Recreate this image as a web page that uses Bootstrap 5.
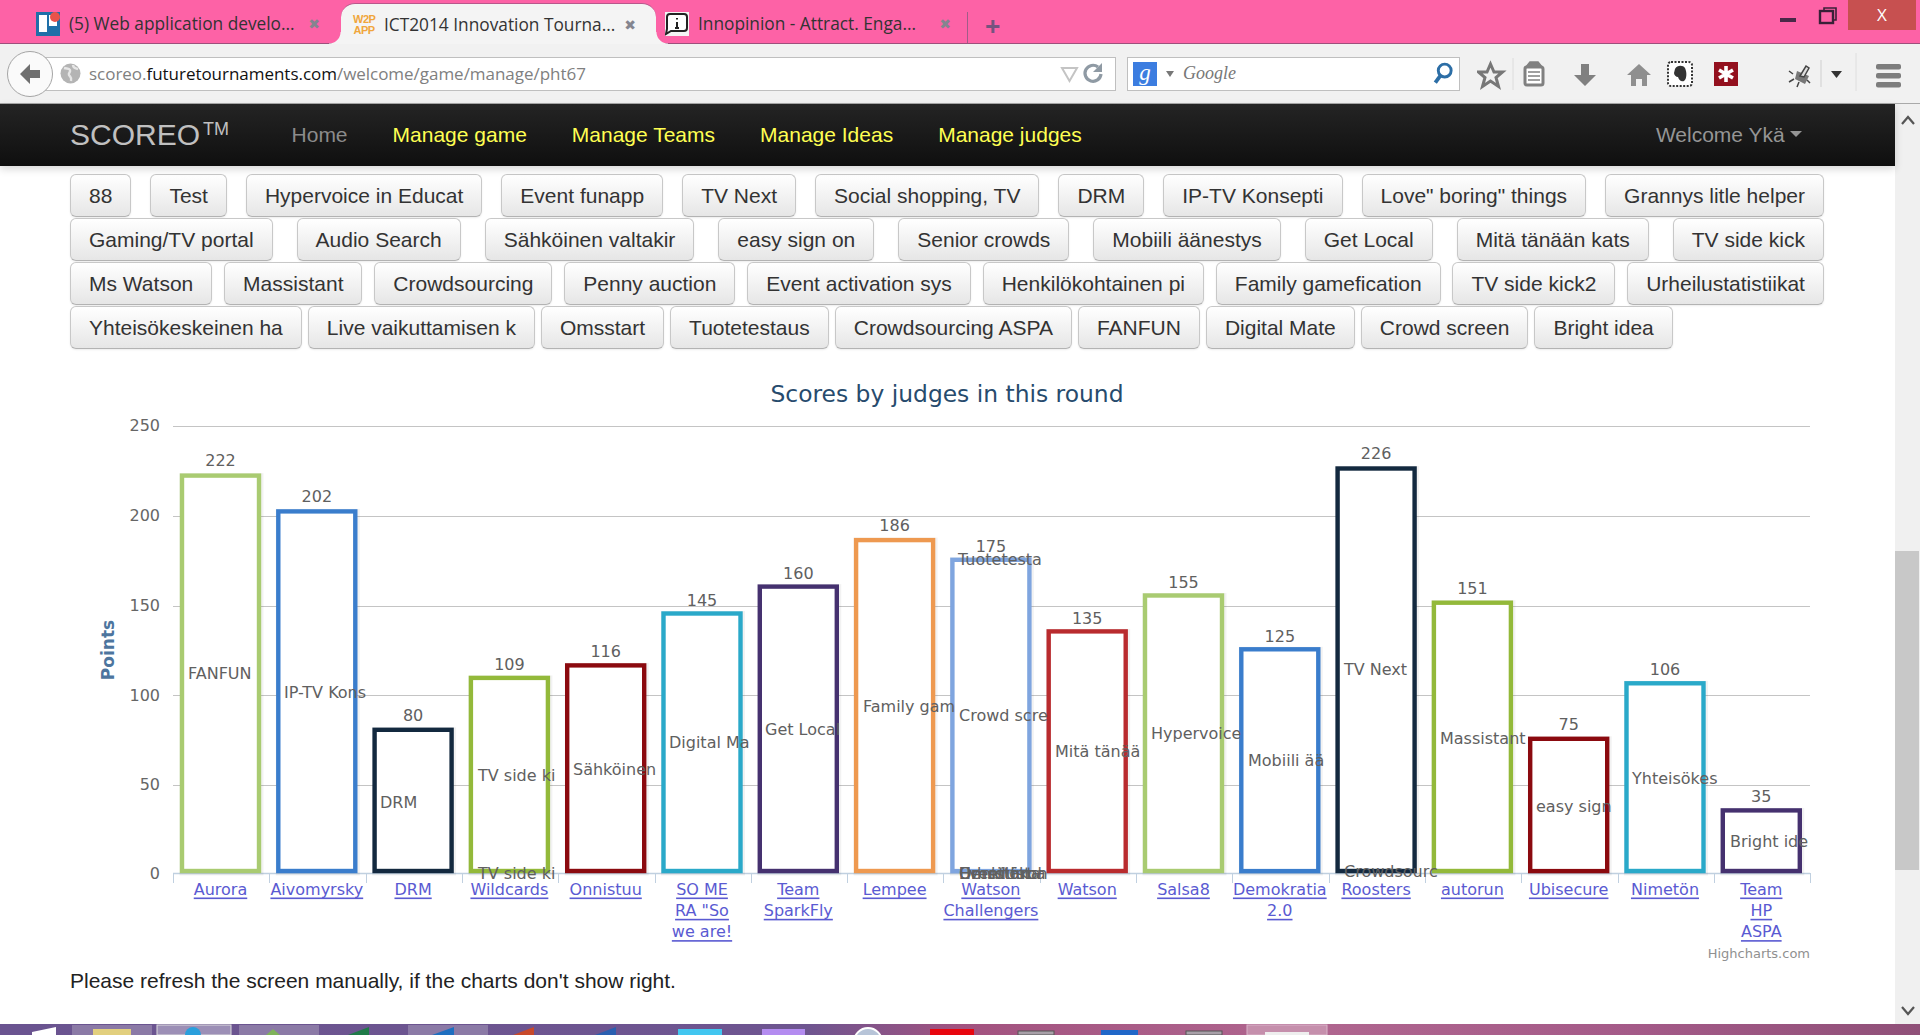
<!DOCTYPE html>
<html lang="en">
<head>
<meta charset="utf-8">
<title>ICT2014 Innovation Tournament</title>
<link href="https://cdn.jsdelivr.net/npm/bootstrap@5.3.0/dist/css/bootstrap.min.css" rel="stylesheet">
<style>
html,body{height:1035px;overflow:hidden;margin:0;background:#fff;font-family:"Liberation Sans",Arial,sans-serif;color:#333}
.shell{height:1035px}
.shell>*{flex:none}
.tabbar{height:44px;background:#fd62a6;border-bottom:1px solid #9d4f7c;padding-left:24px;font-family:"Open Sans",sans-serif;font-size:17.3px;color:#333}
.tabcell{height:43px;width:317px;padding:5px 21px 0 12px;gap:9px}
.tabcell.on{width:315px;height:41px;margin:3px 0 -1px;padding:2px 20px 0 12px;background:#f4f4f4;border-radius:14px 14px 0 0;position:relative;border-top:1px solid #b9578c;z-index:1}
.tabcell.on::before,.tabcell.on::after{content:"";position:absolute;bottom:0;width:12px;height:12px}
.tabcell.on::before{left:-12px;background:radial-gradient(circle at 0 0,transparent 11px,#f4f4f4 12px)}
.tabcell.on::after{right:-12px;background:radial-gradient(circle at 100% 0,transparent 11px,#f4f4f4 12px)}
.tabcell.third{width:311px;padding:5px 16px 0 9px}
.tabname{flex:1;white-space:nowrap;overflow:hidden}
.tabx{color:#85858f;font:14px/1 "DejaVu Sans",sans-serif}
.favi{width:24px;height:24px;flex:none}
.wtp{width:22px;flex:none;color:#f0a63c;font:700 11px/11px "Liberation Sans",sans-serif;text-align:center;letter-spacing:-.5px}
.plus{color:#75537f;font-size:27px;font-weight:700;line-height:1;border-left:1px solid #a05c88;height:31px;padding:0 0 0 17px;margin-top:12px}
.winctl{margin-left:auto;align-self:flex-start;height:30px}
.closer{width:68px;height:30px;background:#c75050;color:#fff;font:17px/30px "Open Sans",sans-serif;text-align:center;margin-right:4px}
.toolrow{height:60px;background:#f1f1f1;border-bottom:1px solid #a9a9a9;padding:0 0 0 7px;position:relative}
.backcirc{width:46px;height:46px;border-radius:50%;background:#fafafa;border:1px solid #a5a5a5;position:relative;z-index:1;flex:none;margin-right:-13px}
.urlbox,.searchbox{height:34px;background:#fff;border:1px solid #bfbfbf;font-family:"Open Sans",sans-serif;font-size:17px}
.urlbox{width:1076px;padding:0 11px 0 19px;gap:8px;color:#808080;flex:none}
.urlbox b{font-weight:400;color:#111}
.urlbox span{flex:1;letter-spacing:-.03px}
.searchbox{width:333px;margin-left:11px;padding:0 4px 0 5px;flex:none}
.gbox{width:24px;height:24px;background:#3c7de0;color:#fff;font:italic 23px/22px "Liberation Serif",serif;text-align:center;flex:none}
.gword{flex:1;color:#777;font:italic 18px "Liberation Serif",serif;padding-left:8px}
.toolicons{gap:0;margin-left:17px}
.bodyrow{height:920px}
.leftcol{width:1895px}
.scoreo{height:62px;padding:0 0 0 70px;background:linear-gradient(#242424,#0f0f0f);width:1895px;flex-wrap:nowrap;box-shadow:0 3px 8px rgba(0,0,0,.16);position:relative;z-index:1}
.scoreo .navbar-brand{font-size:30px;color:#c0c0c0;padding:0;margin:0 40px 0 0;line-height:1}
.scoreo .navbar-brand sup{font-size:18px;top:-.55em;margin-left:3px}
.scoreo .navbar-nav .nav-link{font-size:21px;padding:0 22.500px;color:#ffff52;line-height:1.2}
.scoreo .navbar-nav .nav-link.quiet{color:#8b8b8b}
.scoreo .navbar-nav .nav-link.hello{color:#959595;padding:0 93px 0 0}
.pagebody{width:1895px;padding:8px 71px 0 70px}
.ideabar{height:44px}
.ideabtn{height:43px;padding:0 18px;font-size:21px;line-height:41px;color:#333;border:1px solid #c8c8c8;border-bottom-color:#b3b3b3;border-radius:6px;background:linear-gradient(#fff,#e6e6e6);box-shadow:0 1px 2px rgba(0,0,0,.08);white-space:nowrap}
.ideabar.loose{gap:6px}
.scorechart{display:block;margin:10px -71px 0 -70px;width:1895px;height:603px}
.chartfont{font-family:"DejaVu Sans",sans-serif}
.refresh{font-size:21px;margin:6px 0 0;color:#222;line-height:24px}
.sbar{width:25px;background:#f0f0f0;position:relative}
.sthumb{position:absolute;left:0;right:1px;top:447px;height:319px;background:#c8c8c8}
.sarrow{position:absolute;left:6px}
.deskstrip{display:block;width:1920px;height:11px}
</style>
</head>
<body>
<div class="shell d-flex flex-column">
  <div class="tabbar d-flex">
    <div class="tabcell d-flex align-items-center">
      <svg class="favi" viewBox="0 0 24 24"><rect width="24" height="24" fill="#1f6fa8"/><rect x="3" y="3" width="8" height="17" fill="#fff"/><rect x="13" y="3" width="8" height="11" fill="#fff"/><circle cx="19" cy="5" r="5" fill="#e8524a"/></svg>
      <span class="tabname">(5) Web application develo...</span><span class="tabx">✖</span>
    </div>
    <div class="tabcell on d-flex align-items-center">
      <span class="wtp">W2P APP</span>
      <span class="tabname">ICT2014 Innovation Tourna...</span><span class="tabx">✖</span>
    </div>
    <div class="tabcell third d-flex align-items-center">
      <svg class="favi" viewBox="0 0 24 24"><rect width="24" height="24" fill="#f4f4f4"/><path d="M5 2h14a3 3 0 0 1 3 3v11a3 3 0 0 1-3 3H6l-5 3 1-5V5a3 3 0 0 1 3-3z" fill="#fff" stroke="#222" stroke-width="2"/><path d="M12 6v1.5M12 10v6M10 16h4" stroke="#222" stroke-width="2" fill="none"/></svg>
      <span class="tabname">Innopinion - Attract. Enga...</span><span class="tabx">✖</span>
    </div>
    <div class="plus">+</div>
    <div class="winctl d-flex align-items-start">
      <svg width="92" height="30" viewBox="0 0 92 30"><rect x="24" y="18" width="16" height="4" fill="#4a2848"/><rect x="64" y="11" width="13" height="12" fill="none" stroke="#3a2038" stroke-width="2.400"/><path d="M68 10V8h12v12h-2" fill="none" stroke="#3a2038" stroke-width="1.600"/></svg>
      <div class="closer">X</div>
    </div>
  </div>

  <div class="toolrow d-flex align-items-center">
    <div class="backcirc d-flex align-items-center justify-content-center">
      <svg width="24" height="24" viewBox="0 0 24 24"><path d="M2 12l10-10v6h10v8H12v6z" fill="#6f6f6f"/></svg>
    </div>
    <div class="urlbox d-flex align-items-center">
      <svg width="21" height="21" viewBox="0 0 21 21"><circle cx="10.5" cy="10.5" r="10" fill="#b4b4b4"/><path d="M4 5c3 1 5 0 6 2s-2 3-1 5 3 2 2 6M13 2c0 3 2 3 5 4" stroke="#e6e6e6" stroke-width="2.400" fill="none"/></svg>
      <span>scoreo.<b>futuretournaments.com</b>/welcome/game/manage/pht67</span>
      <svg width="44" height="24" viewBox="0 0 44 24"><path d="M2 6h15l-7.500 13z" fill="none" stroke="#c4c4c4" stroke-width="2"/><path d="M41 12a8 8 0 1 1-3-7" fill="none" stroke="#8f9aa4" stroke-width="3.200"/><path d="M42 1v9h-9z" fill="#8f9aa4"/></svg>
    </div>
    <div class="searchbox d-flex align-items-center">
      <div class="gbox">g</div>
      <svg width="10" height="8" viewBox="0 0 10 8" class="ms-2"><path d="M1 1h8L5 7z" fill="#777"/></svg>
      <span class="gword">Google</span>
      <svg width="24" height="24" viewBox="0 0 26 28"><circle cx="15" cy="10" r="7.500" fill="none" stroke="#2c6ea6" stroke-width="3.400"/><path d="M10 16l-6 8" stroke="#2c6ea6" stroke-width="4.400"/></svg>
    </div>
    <div class="toolicons d-flex align-items-center">
      <svg width="431" height="50" viewBox="0 0 431 50">
        <path d="M13.500 15l3.500 8h8.500l-6.500 5.500 2.500 9-8-5.500-8 5.500 2.500-9-6.500-5.500h8.500z" fill="none" stroke="#777" stroke-width="3"/>
        <path d="M36 9v32" stroke="#dcdcdc"/>
        <rect x="48" y="18" width="18" height="18" rx="2" fill="#fff" stroke="#808080" stroke-width="3"/><path d="M53 13h8l4 5H49zM51 23h12M51 27h12M51 31h12" fill="#808080" stroke="#808080" stroke-width="1.600"/>
        <path d="M104 15h8v11h7l-11 11-11-11h7z" fill="#808080"/>
        <path d="M162 15l12 11h-4v11h-5v-7h-6v7h-5V26h-4z" fill="#8f8f8f"/>
        <rect x="191" y="13" width="24" height="24" rx="3" fill="#fff" stroke="#333" stroke-dasharray="2 1.500" stroke-width="2"/><path d="M198 20c2-4 8-4 10-1 2 4 2 11-1 13-3 1-5-1-6-4-2 0-4-2-4-4z" fill="#333"/>
        <rect x="237" y="13" width="24" height="24" fill="#93101e"/><path d="M249 17v16M242 21l14 8M256 21l-14 8" stroke="#fff" stroke-width="3.600"/>
        <g transform="translate(4 0)"><path d="M316 22l12 5-4 8-10-5z" fill="#777"/><path d="M319 27l6-10 3 2-5 9zM312 25l-4-3M313 30l-5 3M318 33l-2 5M326 31l3 3" stroke="#444" stroke-width="1.500" fill="#ddd"/></g>
        <path d="M344 11v27" stroke="#cfcfcf"/>
        <path d="M354 22h11l-5.500 7z" fill="#333"/>
        <path d="M379 4v38" stroke="#dedede"/>
        <rect x="399" y="15" width="25" height="5.500" rx="2" fill="#7d7d7d"/><rect x="399" y="24" width="25" height="5.500" rx="2" fill="#7d7d7d"/><rect x="399" y="33" width="25" height="5.500" rx="2" fill="#7d7d7d"/>
      </svg>
    </div>
  </div>

  <div class="bodyrow d-flex">
    <div class="leftcol">
      <nav class="navbar navbar-expand scoreo align-items-center">
        <a class="navbar-brand" href="#">SCOREO<sup>TM</sup></a>
        <ul class="navbar-nav flex-grow-1">
          <li class="nav-item"><a class="nav-link quiet" href="#">Home</a></li>
          <li class="nav-item"><a class="nav-link" href="#">Manage game</a></li>
          <li class="nav-item"><a class="nav-link" href="#">Manage Teams</a></li>
          <li class="nav-item"><a class="nav-link" href="#">Manage Ideas</a></li>
          <li class="nav-item"><a class="nav-link" href="#">Manage judges</a></li>
          <li class="nav-item ms-auto"><a class="nav-link hello dropdown-toggle" href="#">Welcome Ykä</a></li>
        </ul>
      </nav>
      <div class="pagebody">
        <div class="ideabar d-flex justify-content-between">
          <button class="btn ideabtn">88</button><button class="btn ideabtn">Test</button><button class="btn ideabtn">Hypervoice in Educat</button><button class="btn ideabtn">Event funapp</button><button class="btn ideabtn">TV Next</button><button class="btn ideabtn">Social shopping, TV</button><button class="btn ideabtn">DRM</button><button class="btn ideabtn">IP-TV Konsepti</button><button class="btn ideabtn">Love" boring" things</button><button class="btn ideabtn">Grannys litle helper</button>
        </div>
        <div class="ideabar d-flex justify-content-between">
          <button class="btn ideabtn">Gaming/TV portal</button><button class="btn ideabtn">Audio Search</button><button class="btn ideabtn">Sähköinen valtakir</button><button class="btn ideabtn">easy sign on</button><button class="btn ideabtn">Senior crowds</button><button class="btn ideabtn">Mobiili äänestys</button><button class="btn ideabtn">Get Local</button><button class="btn ideabtn">Mitä tänään kats</button><button class="btn ideabtn">TV side kick</button>
        </div>
        <div class="ideabar d-flex justify-content-between">
          <button class="btn ideabtn">Ms Watson</button><button class="btn ideabtn">Massistant</button><button class="btn ideabtn">Crowdsourcing</button><button class="btn ideabtn">Penny auction</button><button class="btn ideabtn">Event activation sys</button><button class="btn ideabtn">Henkilökohtainen pi</button><button class="btn ideabtn">Family gamefication</button><button class="btn ideabtn">TV side kick2</button><button class="btn ideabtn">Urheilustatistiikat</button>
        </div>
        <div class="ideabar loose d-flex">
          <button class="btn ideabtn">Yhteisökeskeinen ha</button><button class="btn ideabtn">Live vaikuttamisen k</button><button class="btn ideabtn">Omsstart</button><button class="btn ideabtn">Tuotetestaus</button><button class="btn ideabtn">Crowdsourcing ASPA</button><button class="btn ideabtn">FANFUN</button><button class="btn ideabtn">Digital Mate</button><button class="btn ideabtn">Crowd screen</button><button class="btn ideabtn">Bright idea</button>
        </div>
        <svg id="scorechart" class="scorechart chartfont" viewBox="0 360 1895 603" xmlns="http://www.w3.org/2000/svg"></svg>
        <p class="refresh">Please refresh the screen manually, if the charts don't show right.</p>
      </div>
    </div>
    <div class="sbar flex-grow-0">
      <svg class="sarrow" style="top:11px" width="14" height="10" viewBox="0 0 14 10"><path d="M1 9l6-7 6 7" fill="none" stroke="#555" stroke-width="2.200"/></svg>
      <div class="sthumb"></div>
      <svg class="sarrow" style="top:902px" width="14" height="10" viewBox="0 0 14 10"><path d="M1 1l6 7 6-7" fill="none" stroke="#555" stroke-width="2.200"/></svg>
    </div>
  </div>

  <svg class="deskstrip" viewBox="0 0 1920 11">
    <defs><linearGradient id="deskgrad"><stop offset="0" stop-color="#6a5490"/><stop offset=".42" stop-color="#6e5590"/><stop offset=".5" stop-color="#a2527f"/><stop offset=".68" stop-color="#b0668f"/><stop offset=".85" stop-color="#a45a88"/><stop offset="1" stop-color="#8f5078"/></linearGradient></defs>
    <rect width="1920" height="11" fill="url(#deskgrad)"/>
    <path d="M32 8l24-5v8H32z" fill="#fff"/>
    <rect x="72" y="1" width="80" height="10" fill="#8b7aa6"/><rect x="93" y="5" width="38" height="6" fill="#e2cf7e"/>
    <rect x="157" y="1" width="74" height="10" fill="#9c8fb6" stroke="#ddd"/><circle cx="193" cy="11" r="8" fill="#2a9fdc"/>
    <rect x="239" y="1" width="80" height="10" fill="#8b7aa6"/><path d="M266 11l7-6 7 6z" fill="#7fb35a"/>
    <path d="M348 11l21-8v8z" fill="#1f7a48"/>
    <rect x="408" y="1" width="80" height="10" fill="#8b7aa6"/><path d="M432 11l22-8v8z" fill="#1e6fc0"/>
    <path d="M513 11l21-8v8z" fill="#c8492a"/><path d="M595 11l21-8v8z" fill="#2a5fb0"/>
    <rect x="678" y="5" width="44" height="6" fill="#42c6f0"/><rect x="762" y="5" width="43" height="6" fill="#b48cf0"/>
    <circle cx="868" cy="18" r="14" fill="#b7c4d8" stroke="#fff" stroke-width="2"/>
    <rect x="930" y="5" width="44" height="6" fill="#e8060e"/>
    <rect x="1018" y="7" width="36" height="4" fill="#a8a0a8" stroke="#555"/>
    <rect x="1101" y="6" width="37" height="5" fill="#2067c8"/>
    <rect x="1186" y="7" width="36" height="4" fill="#a8a0a8" stroke="#555"/>
    <rect x="1247" y="1" width="80" height="10" fill="#c58fac" stroke="#d9b4c9"/><rect x="1265" y="8" width="44" height="3" fill="#eee"/>
  </svg>
</div>

<script src="https://cdn.jsdelivr.net/npm/bootstrap@5.3.0/dist/js/bootstrap.bundle.min.js"></script>
<script>
(function(){
  var pal={g:'#a9cb71',b:'#3a7dcc',n:'#13293f',l:'#93b93a',r:'#8b0a0f',t:'#2aa9c9',p:'#45316f',o:'#ee9950',s:'#7fa5df',c:'#b92b2e'};
  var data=[
    [222,'g',['Aurora'],460],[202,'b',['Aivomyrsky'],496],[80,'n',['DRM'],715],[109,'l',['Wildcards'],664],
    [116,'r',['Onnistuu'],651],[145,'t',['SO ME','RA "So','we are!'],600],[160,'p',['Team','SparkFly'],573],
    [186,'o',['Lempee'],525],[175,'s',['Watson','Challengers'],546],[135,'c',['Watson'],618],[155,'g',['Salsa8'],582],
    [125,'b',['Demokratia','2.0'],636],[226,'n',['Roosters'],453],[151,'l',['autorun'],588],[75,'r',['Ubisecure'],724],
    [106,'t',['Nimetön'],669],[35,'p',['Team','HP','ASPA'],796]];
  var inner=[['FANFUN',188,673],['IP-TV Kons',284,692],['DRM',380,802],['TV side ki',478,775],['TV side ki',478,873],
    ['Sähköinen',573,769],['Digital Ma',669,742],['Get Local',765,729],['Family gam',863,706],['Tuotetesta',958,559],
    ['Crowd scre',959,715],['Omsstart',959,873],['Henkilökoh',959,873],['Urheilusta',959,873],['Event funa',959,873],
    ['Mitä tänää',1055,751],['Hypervoice',1151,733],['Mobiili ää',1248,760],['TV Next',1344,669],['Crowdsourc',1344,871],
    ['Massistant',1440,738],['easy sign',1536,806],['Yhteisökes',1632,778],['Bright ide',1730,841]];
  var h='';
  var esc=function(s){return s.replace(/"/g,'&quot;')};
  var text=function(s,x,y,attrs){return '<text x="'+x+'" y="'+y+'" dominant-baseline="central" '+attrs+'>'+s+'</text>'};
  h+=text('Scores by judges in this round',947,394,'text-anchor="middle" font-size="23.4" fill="#274b6d"');
  [[250,426.5],[200,516.5],[150,606.5],[100,695.5],[50,785.5]].forEach(function(g){
    h+='<line x1="173" x2="1810" y1="'+g[1]+'" y2="'+g[1]+'" stroke="#c4c4c4" stroke-width="1.200"/>';
  });
  [[250,425],[200,515],[150,605],[100,695],[50,784],[0,873]].forEach(function(g){
    h+=text(g[0],160,g[1],'text-anchor="end" font-size="16" fill="#666"');
  });
  h+=text('Points',0,0,'text-anchor="middle" font-size="17" font-weight="700" fill="#4d759e" transform="translate(108 650) rotate(-90)"');
  h+='<line x1="173" x2="1810" y1="873.500" y2="873.500" stroke="#c0d0e0" stroke-width="1.500"/>';
  for(var k=0;k<=17;k++){var tx=Math.round(173+96.3*k)+.5;h+='<line x1="'+tx+'" x2="'+tx+'" y1="873" y2="883" stroke="#c0d0e0"/>';}
  data.forEach(function(d,i){
    var cx=220.5+96.3*i, top=873-d[0]*1.79, col=pal[d[1]];
    var x=(cx-38.5).toFixed(1), y=top.toFixed(1), ht=(871-top).toFixed(1);
    h+='<rect x="'+(+x+1)+'" y="'+(+y+1)+'" width="77" height="'+ht+'" fill="none" stroke="#000" stroke-opacity=".05" stroke-width="7"/>';
    h+='<rect x="'+x+'" y="'+y+'" width="77" height="'+ht+'" fill="#fff" stroke="'+col+'" stroke-width="4.400"/>';
  });
  data.forEach(function(d,i){
    var cx=220.5+96.3*i;
    h+=text(d[0],cx,d[3],'text-anchor="middle" font-size="16" fill="#606060"');
    d[2].forEach(function(l,j){
      h+=text(esc(l),cx,889+21.3*j,'text-anchor="middle" font-size="16" fill="#5a5ad2" text-decoration="underline"');
    });
  });
  inner.forEach(function(t){h+=text(t[0],t[1],t[2],'font-size="16" fill="#606060"');});
  h+=text('Highcharts.com',1810,953,'text-anchor="end" font-size="13" fill="#909090"');
  document.getElementById('scorechart').innerHTML=h;
})();
</script>
</body>
</html>
